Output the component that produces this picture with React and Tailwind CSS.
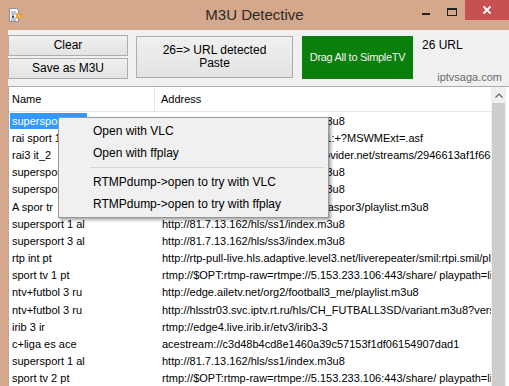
import React from 'react';

const rows = [
  ['supersport 3 al', 'http://81.7.13.162/hls/ss3/index.m3u8'],
  ['rai sport 1', 'http://212.162.68.162/live/raisport1:+?MSWMExt=.asf'],
  ['rai3 it_2', 'http://edge01.live.hls.streamingprovider.net/streams/2946613af1f6634bd6e5b3/playlist.m3u8'],
  ['supersport 2 al', 'http://81.7.13.162/hls/ss2/index.m3u8'],
  ['supersport 4 al', 'http://81.7.13.162/hls/ss4/index.m3u8'],
  ['A spor tr', 'http://trkvz-live.ercdn.net/asporhd/aspor3/playlist.m3u8'],
  ['supersport 1 al', 'http://81.7.13.162/hls/ss1/index.m3u8'],
  ['supersport 3 al', 'http://81.7.13.162/hls/ss3/index.m3u8'],
  ['rtp int pt', 'http://rtp-pull-live.hls.adaptive.level3.net/liverepeater/smil:rtpi.smil/playlist.m3u8'],
  ['sport tv 1 pt', 'rtmp://$OPT:rtmp-raw=rtmpe://5.153.233.106:443/share/ playpath=live_sporttv1'],
  ['ntv+futbol 3 ru', 'http://edge.ailetv.net/org2/football3_me/playlist.m3u8'],
  ['ntv+futbol 3 ru', 'http://hlsstr03.svc.iptv.rt.ru/hls/CH_FUTBALL3SD/variant.m3u8?version=2'],
  ['irib 3 ir', 'rtmp://edge4.live.irib.ir/etv3/irib3-3'],
  ['c+liga es ace', 'acestream://c3d48b4cd8e1460a39c57153f1df06154907dad1'],
  ['supersport 1 al', 'http://81.7.13.162/hls/ss1/index.m3u8'],
  ['sport tv 2 pt', 'rtmp://$OPT:rtmp-raw=rtmpe://5.153.233.106:443/share/ playpath=live_sporttv2'],
];

function AppIcon() {
  return (
    <svg width="16" height="16" viewBox="0 0 16 16">
      <path d="M2.5 1.5h7l2 2v11h-9z" fill="#fafafa" stroke="#8a8f99" />
      <path d="M4 5h5M4 7h6M4 11h6M4 13h5" stroke="#7b8fb0" strokeWidth="1" />
      <rect x="5" y="8.5" width="2" height="2" fill="#333" />
      <circle cx="12" cy="9" r="3" fill="#f0a030" />
      <path d="M11 8l2 2" stroke="#fff3c0" strokeWidth="1" />
    </svg>
  );
}

function WinButton({ children, className }) {
  return (
    <div className={`flex flex-col items-center justify-center border border-[#adadad] bg-gradient-to-b from-[#f0f0f0] to-[#e3e3e3] text-[12px] leading-[13px] text-black ${className}`}>
      {children}
    </div>
  );
}

export default function App() {
  return (
    <div className="relative w-[509px] h-[386px] overflow-hidden bg-[#d5a78b] font-['Liberation_Sans',Arial,sans-serif] text-black">
      {/* title bar */}
      <div className="h-[30px] grid grid-cols-[1fr_auto_1fr]">
        <div className="pl-[7px] pt-[7px]">
          <AppIcon />
        </div>
        <div className="pt-[6px] text-[15px] leading-[18px] text-[#2a2a2a]">M3U Detective</div>
        <div className="flex justify-end items-start">
          <div className="w-[26px] h-[20px] flex items-start justify-center pt-[13px]">
            <div className="w-[8px] h-[2px] bg-[#222]" />
          </div>
          <div className="w-[26px] h-[20px] flex items-start justify-center pt-[8px]">
            <div className="w-[10px] h-[8px] border border-[#222] border-t-2" />
          </div>
          <div className="w-[44px] h-[20px] bg-[#c75050] flex items-center justify-center">
            <svg width="10" height="10" viewBox="0 0 10 10">
              <path d="M1.5 1.5l7 7M8.5 1.5l-7 7" stroke="#fff" strokeWidth="1.8" />
            </svg>
          </div>
        </div>
      </div>

      {/* client area */}
      <div className="ml-[8px] h-[356px] bg-[#f0f0f0] flex flex-col">
        {/* toolbar */}
        <div className="h-[56px] flex items-start pt-[5px]">
          <div className="w-[120px] flex flex-col gap-[2px]">
            <WinButton className="h-[21px]">Clear</WinButton>
            <WinButton className="h-[21px]">Save as M3U</WinButton>
          </div>
          <WinButton className="ml-[8px] mt-[1px] w-[157px] h-[42px]">
            <span>26=&gt; URL detected</span>
            <span>Paste</span>
          </WinButton>
          <div className="ml-[9px] mt-[1px] w-[111px] h-[43px] bg-[#0a7f0c] flex items-center justify-center whitespace-nowrap text-[11px] tracking-[-0.3px] text-[#f2f2f2]">
            Drag All to SimpleTV
          </div>
          <div className="ml-[9px] flex-1 h-[49px] flex flex-col pr-[7px]">
            <div className="pt-[3px] text-[12px] leading-[14px]">26 URL</div>
            <div className="mt-auto self-end text-[11px] leading-[13px] text-[#6b6b6b]">iptvsaga.com</div>
          </div>
        </div>

        {/* list view */}
        <div className="flex-1 min-h-0 flex bg-white border-t border-l border-[#acacac]">
          <div className="flex-1 min-w-0 overflow-hidden">
            <div className="h-[25px] flex border-b border-[#e5e5e5] text-[11px]">
              <div className="w-[146px] pl-[3px] flex items-center border-r border-[#e5e5e5]">Name</div>
              <div className="pl-[6px] flex items-center">Address</div>
            </div>
            {rows.map(([name, url], i) => (
              <div key={i} className="h-[17.2px] flex items-center whitespace-nowrap text-[11px] leading-[16px]">
                <div className="w-[146px] shrink-0 pl-[1px]">
                  <span className={i === 0 ? 'px-[2px] inline-block bg-[#3399ff] text-white' : 'px-[2px] inline-block'}>{name}</span>
                </div>
                <div className="pl-[7px]">{url}</div>
              </div>
            ))}
          </div>
          <div className="w-[15px] flex flex-col bg-[#f0f0f0]">
            <div className="h-[16px] flex items-center justify-center">
              <svg width="8" height="5" viewBox="0 0 8 5">
                <path d="M0.5 4.5L4 1l3.5 3.5" stroke="#606060" strokeWidth="1.2" fill="none" />
              </svg>
            </div>
            <div className="flex-1 bg-[#cdcdcd] mx-px" />
          </div>
          <div className="w-[3px]" />
        </div>
      </div>

      {/* context menu */}
      <div className="absolute left-[58px] top-[117px] w-[271px] bg-[#f0f0f0] border border-[#979797] shadow-[2px_2px_3px_rgba(0,0,0,0.35)] py-[2px] text-[12px] leading-[14px]">
        <div className="h-[22px] flex items-center pl-[34px]">Open with VLC</div>
        <div className="h-[22px] flex items-center pl-[34px]">Open with ffplay</div>
        <div className="h-[7px] flex items-center">
          <div className="ml-[31px] mr-[3px] flex-1 h-px bg-[#d5d5d5]" />
        </div>
        <div className="h-[22px] flex items-center pl-[34px]">RTMPdump-&gt;open to try with VLC</div>
        <div className="h-[22px] flex items-center pl-[34px]">RTMPdump-&gt;open to try with ffplay</div>
      </div>
    </div>
  );
}
